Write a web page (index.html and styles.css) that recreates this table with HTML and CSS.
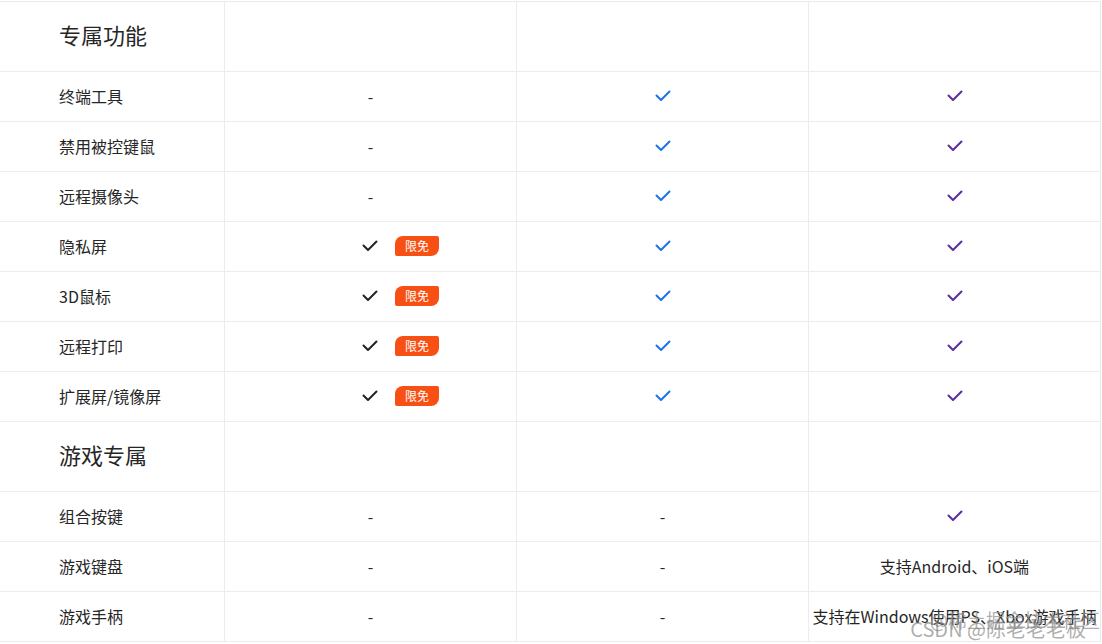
FILE: index.html
```html
<!DOCTYPE html>
<html lang="zh-CN">
<head>
<meta charset="utf-8">
<link rel="stylesheet" href="styles.css">
</head>
<body>
<svg width="0" height="0" class="defs">
  <defs>
    <symbol id="chk" viewBox="0 0 16 12"><path d="M1.5 5.5 L6 10 L14.5 1.5" fill="none" stroke="currentColor" stroke-width="2" stroke-linecap="round" stroke-linejoin="round"/></symbol>
  </defs>
</svg>
<div class="page">
  <div class="table">
    <div class="cell sec">专属功能</div><div class="cell"></div><div class="cell"></div><div class="cell last"></div>

    <div class="cell lbl">终端工具</div><div class="cell c">-</div><div class="cell c"><svg class="ck blue"><use href="#chk"/></svg></div><div class="cell c last"><svg class="ck purple"><use href="#chk"/></svg></div>

    <div class="cell lbl">禁用被控键鼠</div><div class="cell c">-</div><div class="cell c"><svg class="ck blue"><use href="#chk"/></svg></div><div class="cell c last"><svg class="ck purple"><use href="#chk"/></svg></div>

    <div class="cell lbl">远程摄像头</div><div class="cell c">-</div><div class="cell c"><svg class="ck blue"><use href="#chk"/></svg></div><div class="cell c last"><svg class="ck purple"><use href="#chk"/></svg></div>

    <div class="cell lbl">隐私屏</div><div class="cell c"><span class="free"><svg class="ck dark"><use href="#chk"/></svg><span class="badge">限免</span></span></div><div class="cell c"><svg class="ck blue"><use href="#chk"/></svg></div><div class="cell c last"><svg class="ck purple"><use href="#chk"/></svg></div>

    <div class="cell lbl">3D鼠标</div><div class="cell c"><span class="free"><svg class="ck dark"><use href="#chk"/></svg><span class="badge">限免</span></span></div><div class="cell c"><svg class="ck blue"><use href="#chk"/></svg></div><div class="cell c last"><svg class="ck purple"><use href="#chk"/></svg></div>

    <div class="cell lbl">远程打印</div><div class="cell c"><span class="free"><svg class="ck dark"><use href="#chk"/></svg><span class="badge">限免</span></span></div><div class="cell c"><svg class="ck blue"><use href="#chk"/></svg></div><div class="cell c last"><svg class="ck purple"><use href="#chk"/></svg></div>

    <div class="cell lbl">扩展屏/镜像屏</div><div class="cell c"><span class="free"><svg class="ck dark"><use href="#chk"/></svg><span class="badge">限免</span></span></div><div class="cell c"><svg class="ck blue"><use href="#chk"/></svg></div><div class="cell c last"><svg class="ck purple"><use href="#chk"/></svg></div>

    <div class="cell sec">游戏专属</div><div class="cell"></div><div class="cell"></div><div class="cell last"></div>

    <div class="cell lbl">组合按键</div><div class="cell c">-</div><div class="cell c">-</div><div class="cell c last"><svg class="ck purple"><use href="#chk"/></svg></div>

    <div class="cell lbl">游戏键盘</div><div class="cell c">-</div><div class="cell c">-</div><div class="cell c last">支持Android、iOS端</div>

    <div class="cell lbl">游戏手柄</div><div class="cell c">-</div><div class="cell c">-</div><div class="cell c last nowrap">支持在Windows使用PS、Xbox游戏手柄</div>
  </div>
  <div class="wm">
    <div class="wm1">@稀土掘金技术社区</div>
    <div class="wm2">CSDN @陈老老老板</div>
  </div>
</div>
</body>
</html>
```

FILE: styles.css
```css
html, body {
  margin: 0;
  padding: 0;
  background: #fff;
}
.defs { position: absolute; }
.page {
  position: relative;
  width: 1102px;
  height: 644px;
  overflow: hidden;
  font-family: "Noto Sans CJK SC", "Noto Sans", sans-serif;
  color: #262626;
  padding-top: 1px;
  box-sizing: border-box;
}
.table {
  display: grid;
  grid-template-columns: 225px 292px 292px 292px;
  grid-template-rows: 70px repeat(7, 50px) 70px repeat(3, 50px);
  border-top: 1px solid #ebebeb;
  width: 1101px;
}
.cell {
  box-sizing: border-box;
  border-right: 1px solid #ececec;
  border-bottom: 1px solid #ececec;
  display: flex;
  align-items: center;
  font-size: 16px;
  line-height: 1;
  padding-bottom: 2px;
}
.sec {
  padding-left: 59px;
  font-size: 22px;
  padding-bottom: 5px;
}
.lbl { padding-left: 59px; }
.c { justify-content: center; }
.nowrap { white-space: nowrap; }
.ck {
  width: 16px;
  height: 12px;
}
.blue { color: #1a73e8; }
.purple { color: #5c2d9e; }
.dark { color: #222; }
.free {
  display: flex;
  align-items: center;
  margin-left: 60px;
}
.badge {
  margin-left: 17px;
  width: 44px;
  height: 20px;
  background: #f84f14;
  color: #fff;
  font-size: 12px;
  display: flex;
  align-items: center;
  justify-content: center;
  border-radius: 8px 2px 8px 2px;
}
.wm {
  position: absolute;
  right: 2px;
  bottom: 5px;
  color: rgba(120, 120, 120, 0.6);
  font-size: 19px;
  line-height: 1;
  pointer-events: none;
  display: flex;
  flex-direction: column;
  align-items: flex-end;
}
.wm1 { margin-right: 0; color: rgba(150, 150, 150, 0.75); }
.wm2 { margin-top: -10px; margin-right: 14px; font-size: 20px; }
```
